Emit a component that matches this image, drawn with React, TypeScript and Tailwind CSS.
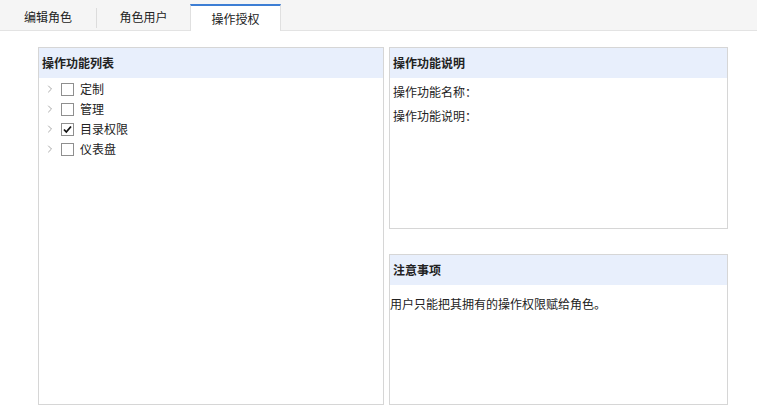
import { ChevronRight } from "lucide-react"

const font = { fontFamily: '"Noto Sans CJK SC", "Noto Sans", sans-serif' }

const tabs = ["编辑角色", "角色用户", "操作授权"]
const funcs = [
  { name: "定制", checked: false },
  { name: "管理", checked: false },
  { name: "目录权限", checked: true },
  { name: "仪表盘", checked: false },
]

function Check({ checked }: { checked: boolean }) {
  return (
    <span className="flex h-[13px] w-[13px] items-center justify-center border border-[#8f8f8f] bg-white">
      {checked && (
        <svg viewBox="0 0 11 11" className="h-[11px] w-[11px]">
          <path d="M2 5.5 L4.3 8 L9 2.5" fill="none" stroke="#111" strokeWidth="1.8" />
        </svg>
      )}
    </span>
  )
}

function Panel({ title, className, children }: { title: string; className?: string; children?: React.ReactNode }) {
  return (
    <div className={`flex flex-col border border-[#d6d6d6] bg-white ${className ?? ""}`}>
      <div className="flex h-[30px] shrink-0 items-center bg-[#e8effc] px-[3px] text-[12px] font-bold text-[#222]">
        {title}
      </div>
      {children}
    </div>
  )
}

export default function App() {
  return (
    <div className="h-[418px] w-[757px] bg-white text-[12px] text-[#222]" style={font}>
      {/* tabs */}
      <div className="flex h-[31px] items-end border-b border-[#e3e3e3] bg-[#f5f5f5]">
        <div className="flex h-[26px] w-[96px] items-center justify-center">{tabs[0]}</div>
        <div className="mb-[2px] h-[20px] w-px bg-[#dcdcdc]" />
        <div className="flex h-[26px] w-[93px] items-center justify-center">{tabs[1]}</div>
        <div className="-mb-px flex h-[27px] w-[91px] items-center justify-center border-x border-t-2 border-x-[#e0e0e0] border-t-[#3d7ed4] bg-white">
          {tabs[2]}
        </div>
      </div>

      <div className="flex gap-[5px] pl-[38px] pt-[16px]">
        <Panel title="操作功能列表" className="h-[358px] w-[346px]">
          <div className="flex flex-col pt-[1px]">
            {funcs.map((f) => (
              <div key={f.name} className="flex h-[20px] items-center">
                <ChevronRight className="ml-[5px] h-[12px] w-[12px] text-[#aaaaaa]" strokeWidth={2} />
                <span className="ml-[5px]"><Check checked={f.checked} /></span>
                <span className="ml-[6px]">{f.name}</span>
              </div>
            ))}
          </div>
        </Panel>

        <div className="flex flex-col gap-[25px]">
          <Panel title="操作功能说明" className="h-[182px] w-[339px]">
            <div className="px-[3px] pt-[2px] leading-[24px]">
              <div>操作功能名称：</div>
              <div>操作功能说明：</div>
            </div>
          </Panel>
          <Panel title="注意事项" className="h-[151px] w-[339px]">
            <div className="pt-[10px] leading-[18px]">用户只能把其拥有的操作权限赋给角色。</div>
          </Panel>
        </div>
      </div>
    </div>
  )
}
